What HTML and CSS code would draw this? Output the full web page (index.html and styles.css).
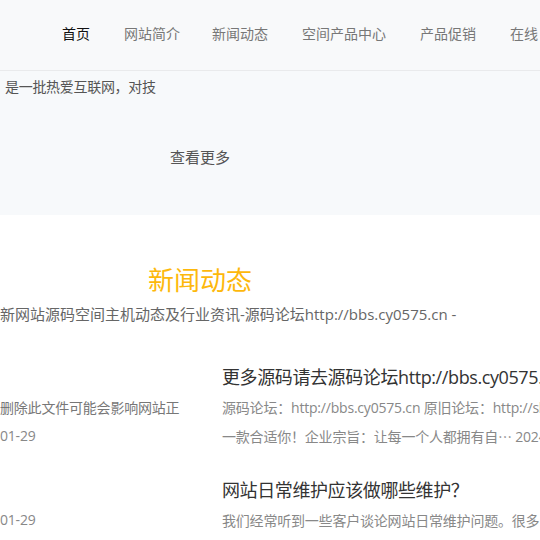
FILE: index.html
```html
<!DOCTYPE html>
<html lang="zh-CN">
<head>
<meta charset="utf-8">
<title>新闻动态</title>
<link rel="stylesheet" href="styles.css">
</head>
<body>
<header class="header">
  <nav class="nav">
    <a class="nav-item active" href="#">首页</a>
    <a class="nav-item" href="#">网站简介</a>
    <a class="nav-item tight" href="#">新闻动态</a>
    <a class="nav-item" href="#">空间产品中心</a>
    <a class="nav-item" href="#">产品促销</a>
    <a class="nav-item" href="#">在线</a>
  </nav>
</header>

<section class="about">
  <p class="about-text">是一批热爱互联网，对技</p>
  <div class="about-more">
    <a class="more" href="#">查看更多</a>
  </div>
</section>

<section class="news">
  <div class="news-head">
    <h2 class="news-title">新闻动态</h2>
    <p class="news-sub">新网站源码空间主机动态及行业资讯-源码论坛http://bbs.cy0575.cn -</p>
  </div>
  <div class="news-grid">
    <div class="col">
      <div class="item">
        <div class="item-title blank" aria-hidden="true"></div>
        <p class="item-desc">
          <span class="line dark">删除此文件可能会影响网站正</span>
          <span class="line">01-29</span>
        </p>
      </div>
      <div class="item">
        <div class="item-title blank" aria-hidden="true"></div>
        <p class="item-desc">
          <span class="line">01-29</span>
        </p>
      </div>
    </div>
    <div class="col">
      <div class="item">
        <h3 class="item-title">更多源码请去源码论坛http://bbs.cy0575.c</h3>
        <p class="item-desc">
          <span class="line">源码论坛：http://bbs.cy0575.cn 原旧论坛：http://sh</span>
          <span class="line">一款合适你！企业宗旨：让每一个人都拥有自<span class="ell">…</span> 2024</span>
        </p>
      </div>
      <div class="item">
        <h3 class="item-title">网站日常维护应该做哪些维护？</h3>
        <p class="item-desc">
          <span class="line">我们经常听到一些客户谈论网站日常维护问题。很多</span>
        </p>
      </div>
    </div>
  </div>
</section>
</body>
</html>
```
FILE: styles.css
```css
* { box-sizing: border-box; }
html, body {
  margin: 0;
  padding: 0;
  overflow: hidden;
  background: #fff;
  font-family: "Open Sans", "Noto Sans CJK SC", sans-serif;
}
a { text-decoration: none; }
h2, h3, p { margin: 0; font-weight: normal; }

.header {
  height: 71px;
  background: #f8f9fa;
  border-bottom: 1px solid #e9eaec;
  box-shadow: 0 1px 3px rgba(0,0,0,0.04);
  display: flex;
  align-items: center;
}
.nav {
  display: flex;
  align-items: center;
  padding-left: 62px;
  padding-bottom: 2px;
  white-space: nowrap;
  gap: 34px;
}
.nav-item {
  font-size: 14px;
  line-height: 20px;
  color: #777;
}
.nav-item.tight { margin-left: -2px; }
.nav-item.active { color: #111; }

.about {
  background: #f7f9fb;
  height: 144px;
  padding-top: 6px;
}
.about-text {
  font-size: 14px;
  line-height: 20px;
  color: #555;
  padding-left: 5px;
  letter-spacing: -0.3px;
  white-space: nowrap;
}
.about-more {
  width: 400px;
  text-align: center;
  margin-top: 49px;
}
.more {
  font-size: 15px;
  line-height: 22px;
  color: #555;
}

.news { padding-top: 47px; }
.news-head { width: 400px; }
.news-title {
  text-align: center;
  font-size: 26px;
  line-height: 36px;
  color: #fdb80c;
}
.news-sub {
  font-size: 15px;
  line-height: 22px;
  color: #666;
  margin-top: 5px;
  white-space: nowrap;
}
.news-grid {
  display: grid;
  grid-template-columns: 190px 1fr;
  column-gap: 32px;
  margin-top: 37px;
}
.item { margin-bottom: 24px; }
.item-title {
  font-size: 18px;
  line-height: 30px;
  color: #333;
  white-space: nowrap;
  letter-spacing: -0.4px;
  margin-bottom: 2px;
}
.item-title.blank { height: 30px; }
.item-desc {
  font-size: 14px;
  line-height: 28px;
  letter-spacing: -0.2px;
  color: #888;
}
.line {
  display: block;
  white-space: nowrap;
}
.line.dark { color: #777; }
.ell { font-family: "Noto Sans CJK SC", sans-serif; }
```
